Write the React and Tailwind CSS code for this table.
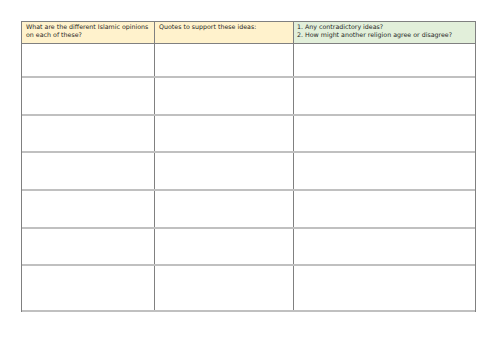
import React from "react";

const rows = [34, 38, 37, 38, 38, 37, 46];

export default function App() {
  return (
    <div className="w-[500px] h-[353px] bg-white pt-[21px] pl-[21px]" style={{ fontFamily: '"DejaVu Sans", Verdana, sans-serif' }}>
      <div className="w-[455px] border-l border-r border-[#808080]">
        <div className="flex h-[23px] border-t border-b border-[#808080] text-[6.3px] leading-[8.5px] text-[#1f1f1f]">
          <div className="w-[133px] shrink-0 bg-[#fff2cc] border-r border-[#808080] pl-[4px] pt-[0.5px]">
            What are the different Islamic opinions on each of these?
          </div>
          <div className="w-[139px] shrink-0 bg-[#fff2cc] border-r border-[#808080] pl-[4px] pt-[0.5px]">
            Quotes to support these ideas:
          </div>
          <div className="flex-1 bg-[#e2efda] pl-[3px] pt-[0.5px]">
            <div>1. Any contradictory ideas?</div>
            <div>2. How might another religion agree or disagree?</div>
          </div>
        </div>
        {rows.map((h, i) => (
          <div
            key={i}
            className="flex border-b-2 border-[#c0c0c0]"
            style={{ height: h }}
          >
            <div className="w-[133px] shrink-0 border-r border-[#808080]" />
            <div className="w-[139px] shrink-0 border-r border-[#808080]" />
            <div className="flex-1" />
          </div>
        ))}
      </div>
    </div>
  );
}
